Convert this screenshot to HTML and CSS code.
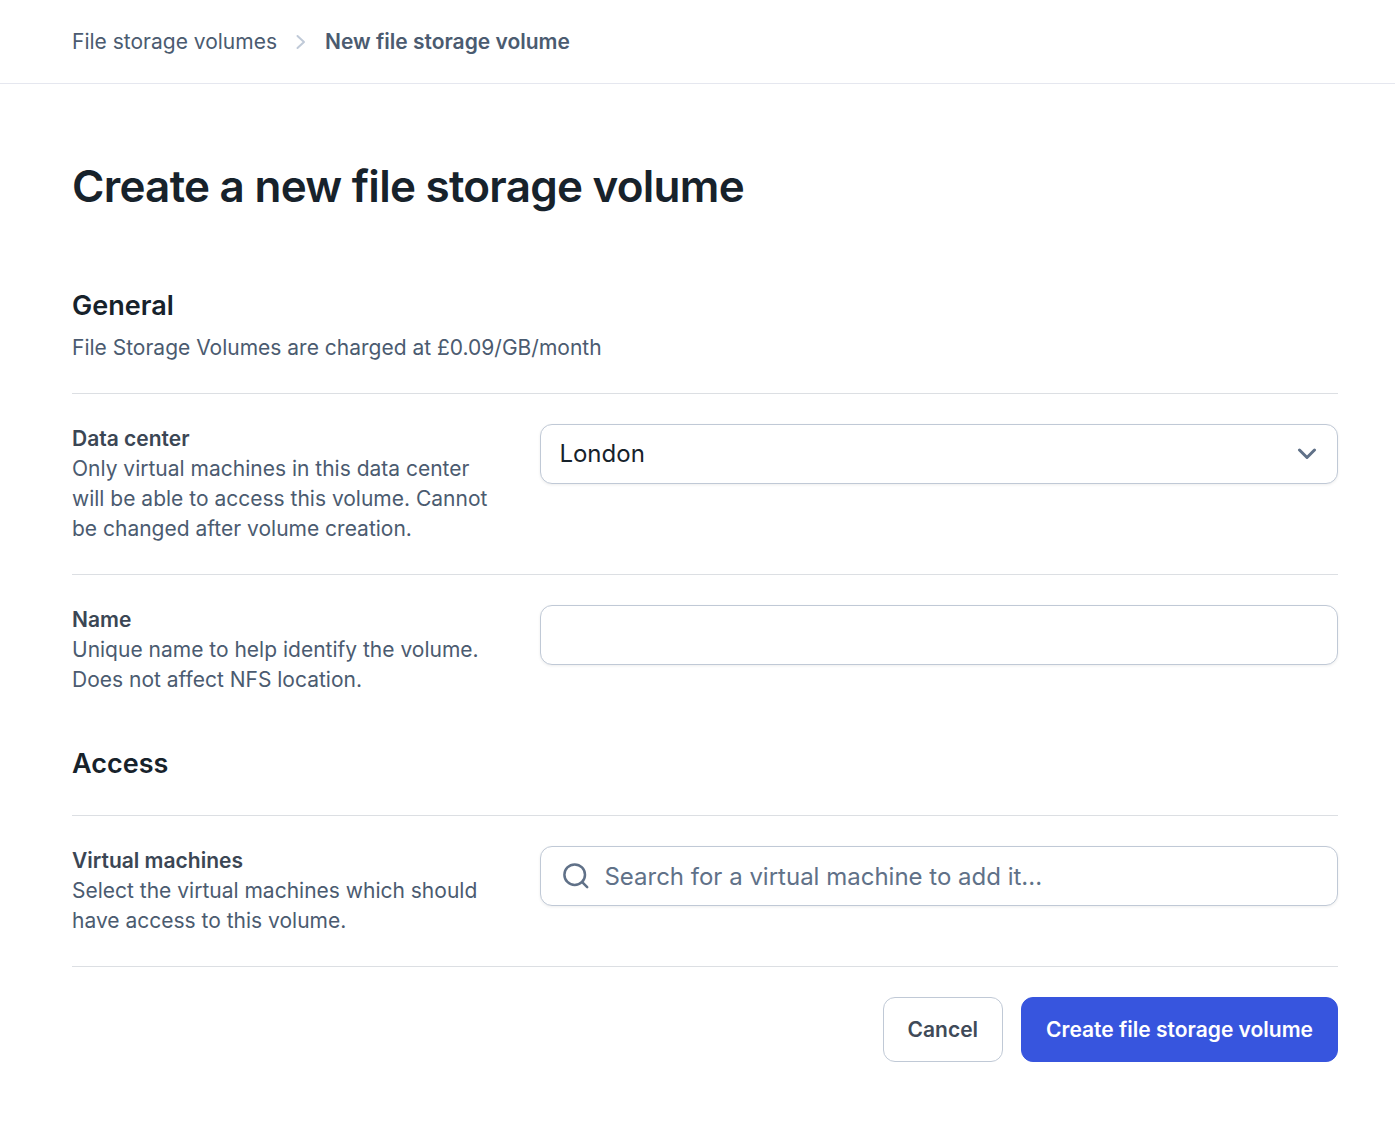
FILE: index.html
```html
<!DOCTYPE html>
<html lang="en">
<head>
<meta charset="utf-8">
<title>New file storage volume</title>
<meta name="viewport" content="width=device-width, initial-scale=1">
<link rel="stylesheet" href="styles.css">
</head>
<body>
<header class="topbar">
  <nav class="breadcrumb" aria-label="Breadcrumb">
    <a href="#">File storage volumes</a>
    <svg class="crumb-sep" viewBox="0 0 12 16" aria-hidden="true"><path d="M2.500 2l6.500 6-6.500 6"/></svg>
    <span class="current" aria-current="page">New file storage volume</span>
  </nav>
</header>
<main class="page">
  <h1>Create a new file storage volume</h1>
  <form class="form">
    <section class="section">
      <div class="section-head">
        <h2>General</h2>
        <p>File Storage Volumes are charged at £0.09/GB/month</p>
      </div>
      <div class="row">
        <div class="info">
          <label for="dc">Data center</label>
          <p>Only virtual machines in this data center will be able to access this volume. Cannot be changed after volume creation.</p>
        </div>
        <div class="field">
          <select id="dc" class="control"><option>London</option></select>
          <svg class="chevron" viewBox="0 0 20 12" aria-hidden="true"><path d="M2.500 2l7.500 7.500 7.500-7.500"/></svg>
        </div>
      </div>
      <div class="row">
        <div class="info">
          <label for="name">Name</label>
          <p>Unique name to help identify the volume. Does not affect NFS location.</p>
        </div>
        <div class="field"><input id="name" class="control" type="text"></div>
      </div>
    </section>
    <section class="section">
      <div class="section-head">
        <h2>Access</h2>
      </div>
      <div class="row">
        <div class="info">
          <label for="vms">Virtual machines</label>
          <p>Select the virtual machines which should have access to this volume.</p>
        </div>
        <div class="field">
          <input id="vms" class="control search" type="text" placeholder="Search for a virtual machine to add it...">
          <svg class="search-icon" viewBox="0 0 28 28" aria-hidden="true"><circle cx="12.700" cy="12.700" r="10.300"/><path d="M20.200 20.200l5 5"/></svg>
        </div>
      </div>
    </section>
    <div class="actions">
      <button type="button" class="btn">Cancel</button>
      <button type="submit" class="btn primary">Create file storage volume</button>
    </div>
  </form>
</main>
</body>
</html>
```
FILE: styles.css
```css
* {
  box-sizing: border-box;
}

body {
  margin: 0;
  background: #fff;
  color: #4b5b70;
  font: 21px/30px Inter, sans-serif;
}

h1, h2, p {
  margin: 0;
}

.topbar {
  padding: 27px 72px 26px;
  border-bottom: 1px solid #e5e7ef;
}

.breadcrumb {
  display: flex;
  align-items: center;
  gap: 18px;
}

.breadcrumb a {
  color: inherit;
  text-decoration: none;
}

.current {
  font-weight: 600;
}

.crumb-sep {
  width: 12px;
  height: 16px;
  fill: none;
  stroke: #c0cad8;
  stroke-width: 2;
  stroke-linecap: round;
  stroke-linejoin: round;
}

.page {
  padding: 72px 57px 84px 72px;
}

h1 {
  color: #17222b;
  font-size: 44px;
  font-weight: 600;
  line-height: 60px;
  letter-spacing: -0.017em;
}

.form {
  margin-top: 69px;
}

.section + .section {
  margin-top: 18px;
}

.section-head {
  padding-bottom: 30px;
}

h2 {
  color: #17222b;
  font-size: 27px;
  font-weight: 600;
  line-height: 42px;
}

.section-head p {
  margin-top: 6px;
}

.row {
  display: grid;
  grid-template-columns: 37fr 63fr;
  padding: 30px 0;
  border-top: 1px solid #dcdfe3;
}

.info {
  padding-right: 40px;
}

.info label {
  display: block;
  color: #3b4654;
  font-weight: 600;
}

.field {
  position: relative;
}

.control {
  display: block;
  width: 100%;
  height: 60px;
  padding: 0 18px;
  border: 1px solid #c0c9d6;
  border-radius: 12px;
  background: #fff;
  box-shadow: 0 1px 3px rgba(0, 0, 0, 0.07);
  color: #17222b;
  font: 24px/36px Inter, sans-serif;
  appearance: none;
}

.control::placeholder {
  color: #607188;
  opacity: 1;
}

.search {
  padding-left: 63px;
}

.chevron {
  position: absolute;
  top: 24px;
  right: 21px;
  width: 20px;
  height: 12px;
  fill: none;
  stroke: #607188;
  stroke-width: 3;
  stroke-linecap: round;
  stroke-linejoin: round;
  pointer-events: none;
}

.search-icon {
  position: absolute;
  top: 16px;
  left: 22px;
  width: 28px;
  height: 28px;
  fill: none;
  stroke: #607188;
  stroke-width: 2.5;
  stroke-linecap: round;
  pointer-events: none;
}

.actions {
  display: flex;
  justify-content: flex-end;
  gap: 18px;
  padding-top: 30px;
  border-top: 1px solid #dcdfe3;
}

.btn {
  height: 65px;
  padding: 0 24px;
  border: 1px solid #c0c9d6;
  border-radius: 12px;
  background: #fff;
  color: #3f4a58;
  font: 600 21px/30px Inter, sans-serif;
}

.primary {
  border-color: #3755de;
  background: #3755de;
  color: #fff;
}
```
